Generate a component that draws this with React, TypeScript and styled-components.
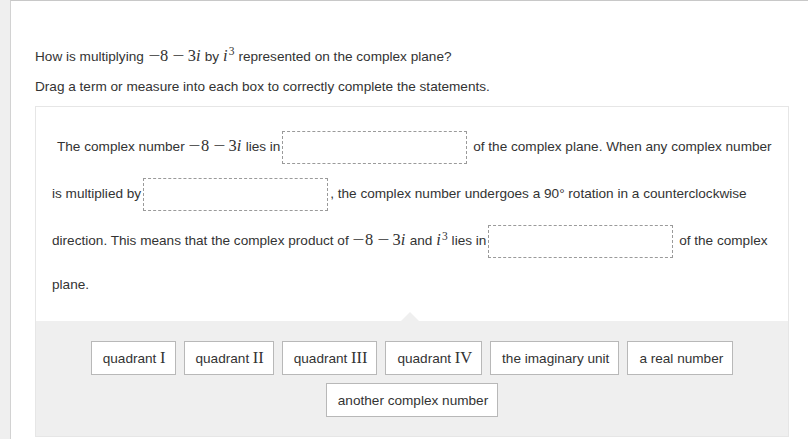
import React from 'react';
import styled, { createGlobalStyle } from 'styled-components';

const GlobalStyle = createGlobalStyle`
  html, body {
    margin: 0;
    padding: 0;
    background: #efefef;
  }
  body {
    font-family: 'Liberation Sans', Arial, Helvetica, sans-serif;
    font-size: 13.6px;
    color: #333;
  }
`;

const Frame = styled.div`
  margin-left: 10px;
  min-height: 100vh;
  box-sizing: border-box;
  background: #fff;
  border-left: 1px solid #d2d2d2;
  border-top: 1px solid #c8c8c8;
  padding: 46px 19px 0 24px;
`;

const Prompt = styled.p<{ gap?: number }>`
  margin: ${(p) => p.gap ?? 0}px 0 0;
  line-height: 19px;
`;

const Exercise = styled.div`
  margin-top: 10px;
  border: 1px solid #e6e6e6;
  background: #fff;
`;

const Statement = styled.div`
  padding: 17px 10px 17px 16px;
  line-height: 39px;
  text-indent: 5px;
`;

const DropBox = styled.span`
  display: inline-block;
  box-sizing: border-box;
  width: 185px;
  height: 33px;
  margin: 7px 2px;
  border: 1px dashed #9a9a9a;
  background: #fff;
  vertical-align: middle;
`;

const MathText = styled.span`
  font-family: 'Liberation Serif', 'DejaVu Serif', serif;
  font-size: 1.21em;
  line-height: 0;
  white-space: nowrap;
  text-indent: 0;
`;

const Minus = styled.span<{ bin?: boolean }>`
  display: inline-block;
  width: 0.76em;
  text-align: center;
  text-indent: 0;
  transform: scaleX(1.3);
  margin: 0 ${(p) => (p.bin ? '0.21em' : '0')};
`;

const Var = styled.span`
  font-style: italic;
  margin-right: 0.03em;
`;

const Sup = styled.span`
  font-size: 0.7em;
  vertical-align: 0.48em;
  line-height: 0;
  margin-left: 0.08em;
`;

const Bank = styled.div`
  position: relative;
  background: #efefef;
  padding: 20px 16px 19px;
  display: flex;
  flex-wrap: wrap;
  justify-content: center;
  gap: 8px;

  &::before {
    content: '';
    position: absolute;
    top: -9px;
    left: 50%;
    margin-left: -11px;
    border-left: 9px solid transparent;
    border-right: 9px solid transparent;
    border-bottom: 9px solid #efefef;
  }
`;

const Chip = styled.div`
  box-sizing: border-box;
  height: 34px;
  display: flex;
  align-items: center;
  padding: 0 9px 0 11px;
  background: #fff;
  border: 1px solid #b8b8b8;
  color: #333;
  white-space: nowrap;
`;

const Roman = styled.span`
  font-family: 'Liberation Serif', 'DejaVu Serif', serif;
  font-size: 1.21em;
  margin-left: 0.22em;
`;

const NegEightMinusThreeI = () => (
  <MathText>
    <Minus>−</Minus>8<Minus bin>−</Minus>3<Var>i</Var>
  </MathText>
);

const ICubed = () => (
  <MathText>
    <Var>i</Var>
    <Sup>3</Sup>
  </MathText>
);

const terms: { label: string; roman?: string }[] = [
  { label: 'quadrant', roman: 'I' },
  { label: 'quadrant', roman: 'II' },
  { label: 'quadrant', roman: 'III' },
  { label: 'quadrant', roman: 'IV' },
  { label: 'the imaginary unit' },
  { label: 'a real number' },
  { label: 'another complex number' },
];

export default function App() {
  return (
    <>
      <GlobalStyle />
      <Frame>
        <Prompt>
          How is multiplying <NegEightMinusThreeI /> by <ICubed /> represented on the complex plane?
        </Prompt>
        <Prompt gap={11}>Drag a term or measure into each box to correctly complete the statements.</Prompt>
        <Exercise>
          <Statement>
            The complex number <NegEightMinusThreeI /> lies in
            <DropBox /> of the complex plane. When any complex number is multiplied by
            <DropBox />, the complex number undergoes a 90° rotation in a counterclockwise direction. This
            means that the complex product of <NegEightMinusThreeI /> and <ICubed /> lies in
            <DropBox /> of the complex plane.
          </Statement>
          <Bank>
            {terms.map((t, i) => (
              <Chip key={i}>
                {t.label}
                {t.roman && <Roman>{t.roman}</Roman>}
              </Chip>
            ))}
          </Bank>
        </Exercise>
      </Frame>
    </>
  );
}
